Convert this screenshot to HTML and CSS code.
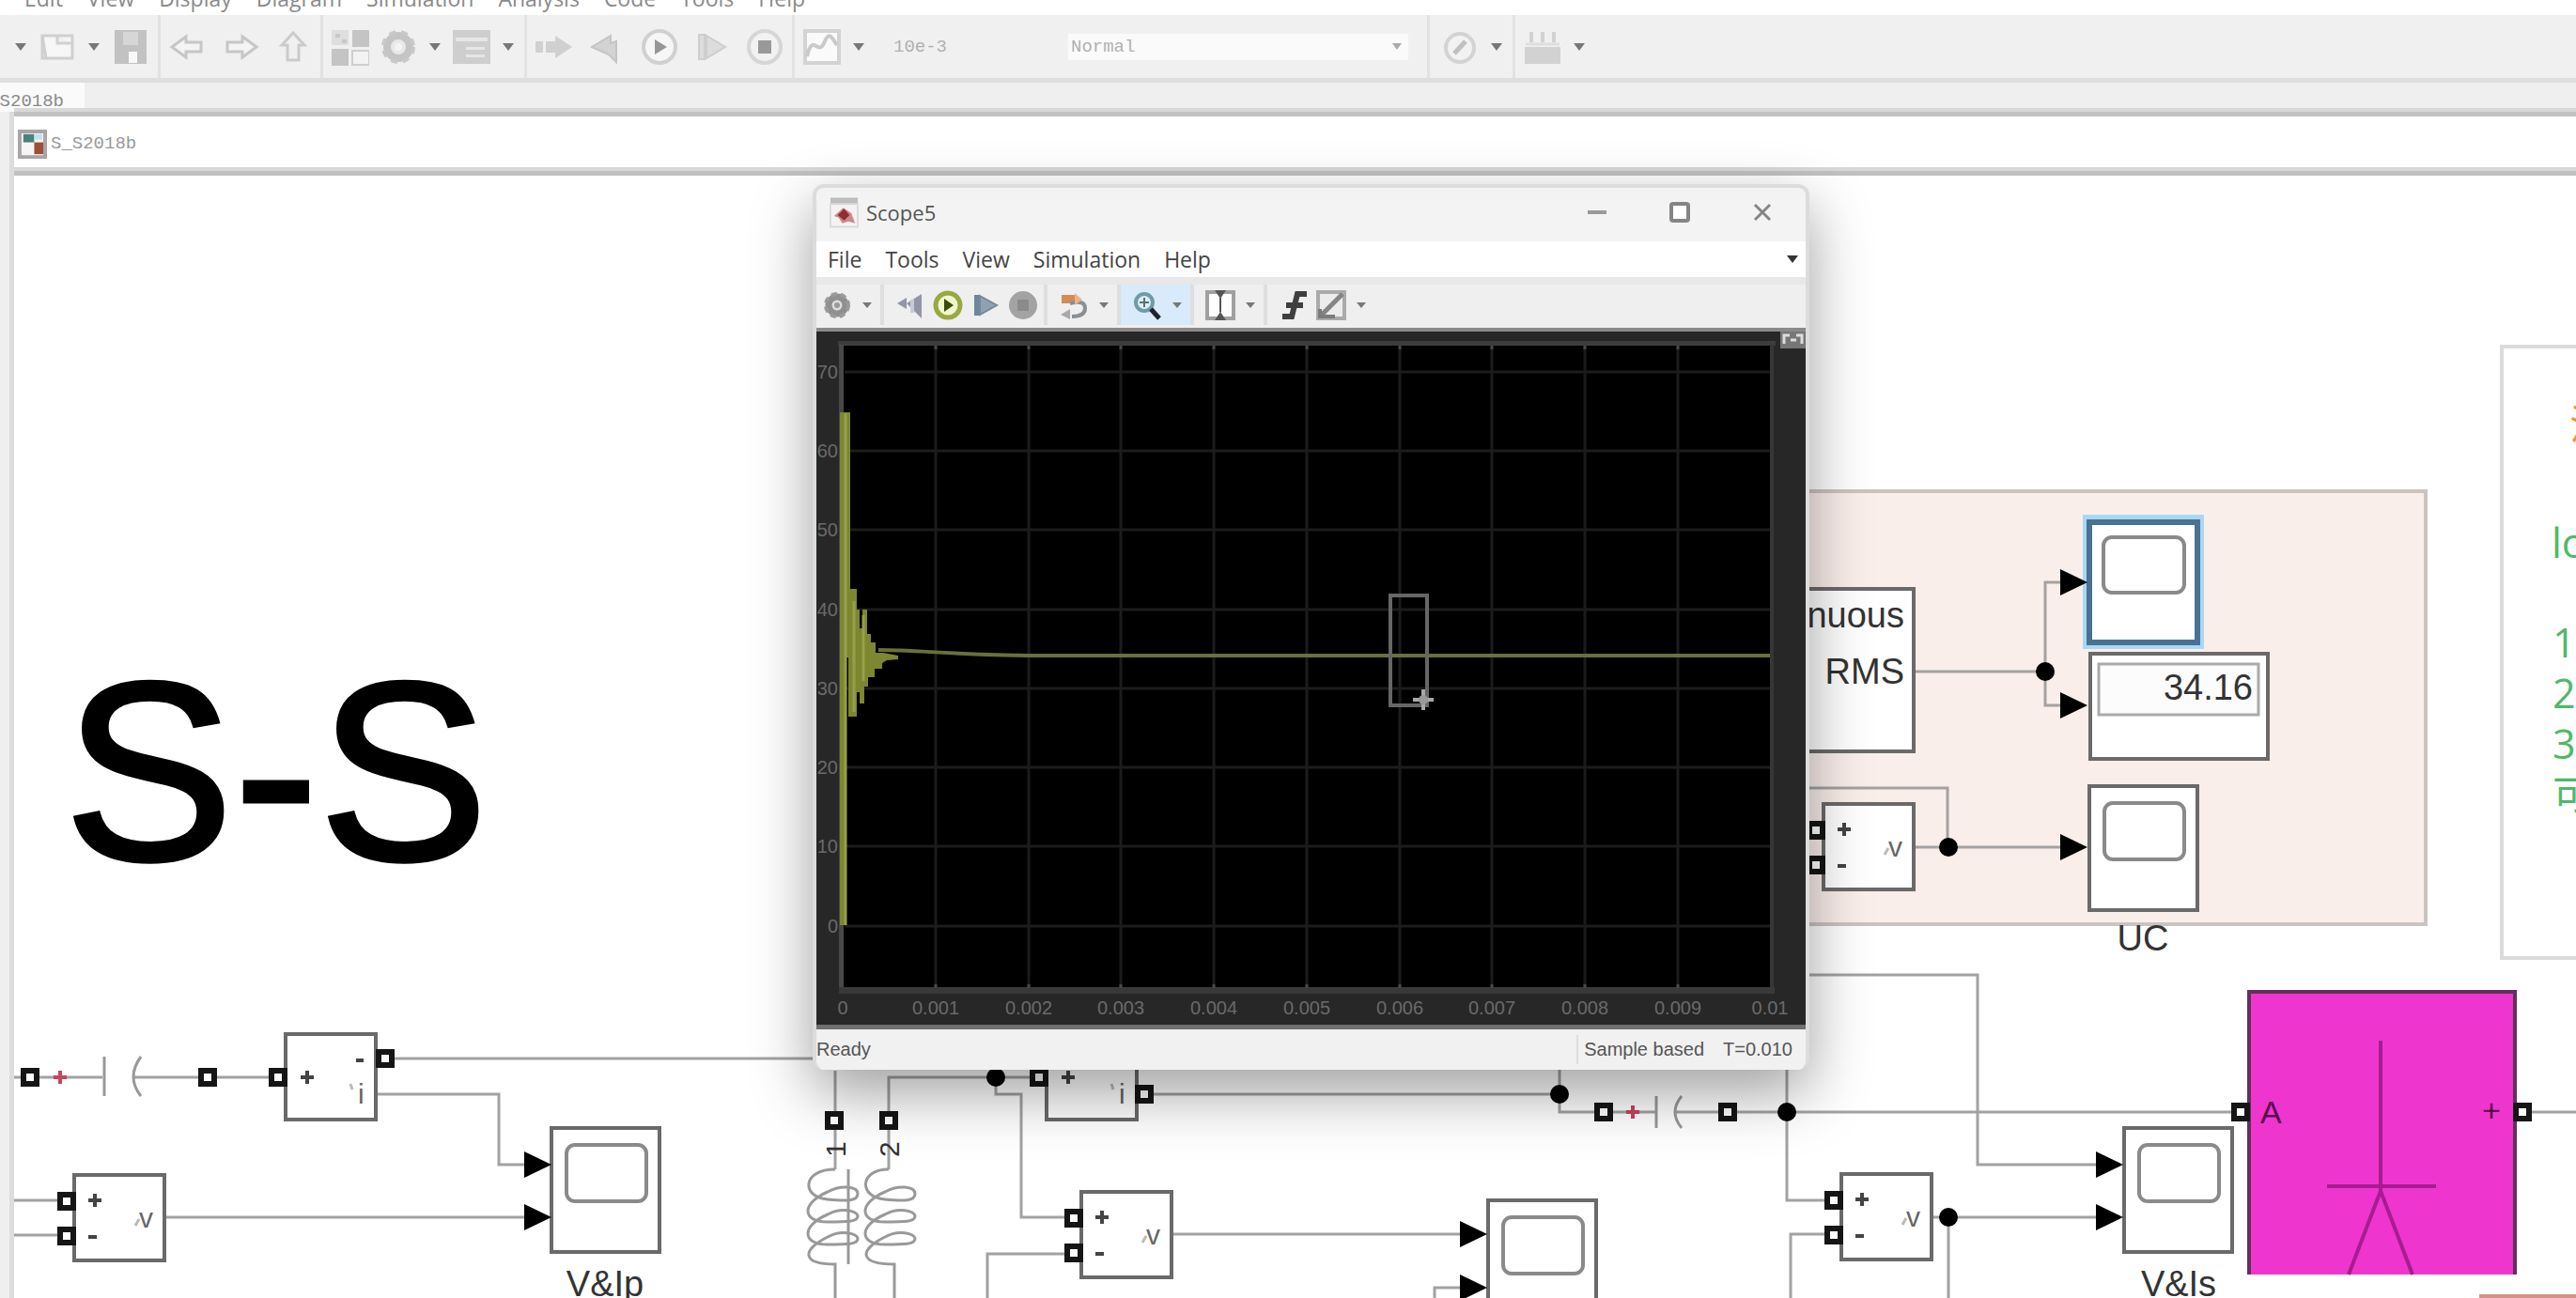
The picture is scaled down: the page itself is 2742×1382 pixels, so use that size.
FILE: index.html
```html
<!DOCTYPE html>
<html lang="en">
<head>
<meta charset="utf-8">
<title>S_S2018b</title>
<link rel="stylesheet" href="styles.css">
</head>
<body>
<div class="app">
  <nav class="menubar" aria-label="Main menu">
    <button>Edit</button><button>View</button><button>Display</button><button>Diagram</button><button>Simulation</button><button>Analysis</button><button>Code</button><button>Tools</button><button>Help</button>
  </nav>

  <div class="toolbar" role="toolbar" aria-label="Model toolbar">
    <div class="group">
      <button class="caret" aria-label="New options"></button>
      <button aria-label="Open"><svg viewBox="0 0 40 40"><path d="M4 8h32v24H8zM4 8v24h4M20 8v8h16" fill="#f6f6f6" stroke="#cfcfcf" stroke-width="3"/></svg></button>
      <button class="caret" aria-label="Open options"></button>
      <button aria-label="Save"><svg viewBox="0 0 40 40"><path d="M3 2h34v36H3z" fill="#c2c2c2"/><path d="M12 4h16v14H12z" fill="#d6d6d6"/><path d="M18 25h9v12h-9z" fill="#f8f8f8"/></svg></button>
    </div>
    <div class="group wide">
      <button aria-label="Back"><svg viewBox="0 0 40 40"><path d="M3 20 18 9v6h16v10H18v6z" fill="#f4f4f4" stroke="#c6c6c6" stroke-width="3"/></svg></button>
      <button aria-label="Forward"><svg viewBox="0 0 40 40"><path d="M37 20 22 9v6H6v10h16v6z" fill="#f4f4f4" stroke="#c6c6c6" stroke-width="3"/></svg></button>
      <button aria-label="Up"><svg viewBox="0 0 40 40"><path d="M20 5 8 18h6v16h12V18h6z" fill="#f0f0f0" stroke="#cbcbcb" stroke-width="3"/></svg></button>
    </div>
    <div class="group">
      <button aria-label="Library browser"><svg viewBox="0 0 40 40"><path d="M0 2h18v16H0z" fill="#dedede"/><path d="M4 6h5v4H4zM11 12h5v4h-5z" fill="#c8c8c8"/><path d="M22 2h18v18H22z" fill="#c4c4c4"/><path d="M0 22h18v18H0z" fill="#c4c4c4"/><path d="M22 24h18v15H22z" fill="#f3f3f3" stroke="#cfcfcf" stroke-width="2"/></svg></button>
      <button aria-label="Model configuration"><svg viewBox="0 0 40 40"><circle cx="20" cy="20" r="12" fill="#e8e8e8" stroke="#c4c4c4" stroke-width="8"/><circle cx="20" cy="20" r="16" fill="none" stroke="#c8c8c8" stroke-width="4" stroke-dasharray="7 6"/><circle cx="20" cy="20" r="4" fill="#f4f4f4"/></svg></button>
      <button class="caret" aria-label="Configuration options"></button>
      <button aria-label="Model explorer"><svg viewBox="0 0 40 40"><path d="M0 2h40v36H0z" fill="#cecece"/><path d="M3 10h34v4H3zM14 20h20v3H14zM14 28h20v3H14z" fill="#e6e6e6"/></svg></button>
      <button class="caret" aria-label="Explorer options"></button>
    </div>
    <div class="group wide">
      <button aria-label="Fast restart"><svg viewBox="0 0 40 40"><path d="M0 14h8v12H0zM11 14h10V8l18 12-18 12v-6H11z" fill="#d0d0d0"/></svg></button>
      <button aria-label="Step back"><svg viewBox="0 0 40 40"><path d="M4 20 24 8v8l6-2v22l-8-8z" fill="#d3d3d3" stroke="#c4c4c4" stroke-width="2"/></svg></button>
      <button aria-label="Run"><svg viewBox="0 0 40 40"><circle cx="20" cy="20" r="17" fill="#f6f6f6" stroke="#d0d0d0" stroke-width="4"/><path d="M15 12v16l13-8z" fill="#969696"/></svg></button>
      <button aria-label="Step forward"><svg viewBox="0 0 40 40"><path d="M6 7h6v26H6zM14 8l20 12-20 12z" fill="#dcdcdc" stroke="#cecece" stroke-width="2"/></svg></button>
      <button aria-label="Stop"><svg viewBox="0 0 40 40"><circle cx="20" cy="20" r="17" fill="#f2f2f2" stroke="#d6d6d6" stroke-width="4"/><path d="M13 13h14v14H13z" fill="#999"/></svg></button>
    </div>
    <div class="group fields">
      <button aria-label="Data inspector"><svg viewBox="0 0 40 40"><path d="M2 3h36v34H2z" fill="#fafafa" stroke="#d3d3d3" stroke-width="4"/><path d="M4 30C10 4 16 30 22 16s8-6 14 2" fill="none" stroke="#cacaca" stroke-width="4"/></svg></button>
      <button class="caret" aria-label="Inspector options"></button>
      <input class="stop-time" type="text" value="10e-3" aria-label="Stop time">
      <span class="mode"><select aria-label="Simulation mode"><option>Normal</option></select></span>
    </div>
    <div class="group check">
      <button aria-label="Model advisor"><svg viewBox="0 0 40 40"><circle cx="20" cy="21" r="15" fill="#f2f2f2" stroke="#d3d3d3" stroke-width="4"/><path d="m14 27 12-13" fill="none" stroke="#c0c0c0" stroke-width="5"/></svg></button>
      <button class="caret" aria-label="Advisor options"></button>
    </div>
    <div class="group">
      <button aria-label="Build"><svg viewBox="0 0 40 40"><path d="M6 4h4v11H6zM18 4h4v11h-4zM30 4h4v11h-4zM1 20h38v18H1z" fill="#d2d2d2"/><path d="M2 17h36" stroke="#dedede" stroke-width="3"/></svg></button>
      <button class="caret" aria-label="Build options"></button>
    </div>
  </div>

  <div class="tabs"><button class="tab">S_S2018b</button></div>

  <div class="workspace">
    <aside class="rail"></aside>
    <main class="editor">
      <div class="crumb">
        <svg class="crumb-icon" viewBox="0 0 32 32"><path d="M2 2h28v28H2z" fill="#f6f6f6" stroke="#a9a4a6" stroke-width="4"/><path d="M6 5h12v9H6z" fill="#4d8078"/><path d="M18 14h10v13H18z" fill="#9a5236"/><path d="M18 5h9v6h-9z" fill="#bfe4ea"/></svg>
        <a href="#model">S_S2018b</a>
      </div>
      <div class="canvas" id="model">
        <svg class="diagram" role="img" aria-label="Block diagram">
          <defs>
            <g id="port"><rect x="-7" y="-7" width="14" height="14" fill="#fff" stroke="#151515" stroke-width="6"/></g>
            <path id="arrow" d="M-29-14 0 0-29 14z"/>
            <g id="scope"><rect width="115" height="132" class="block"/><rect x="16" y="18" width="85" height="60" rx="9" class="screen"/></g>
            <g id="volt">
              <rect width="96" height="91" class="block"/>
              <use href="#port" x="-8" y="28"/><use href="#port" x="-8" y="65"/>
              <path d="M15 27h14M22 20v14M15 66h9" class="sign"/>
              <path d="m65 54 4-7" class="faint"/>
              <text x="69" y="56" class="small">v</text>
            </g>
            <g id="amp">
              <rect width="96" height="91" class="block"/>
              <use href="#port" x="-8" y="46"/>
              <path d="M16 46h14M23 39v14M75 28h8" class="sign"/>
              <path d="m69 53 2 6" class="faint"/>
              <text x="77" y="74" class="small">i</text>
            </g>
          </defs>
          <g transform="translate(-15 -187)">
            <text x="68" y="915" class="title">S-S</text>

            <rect x="1700" y="523" width="882" height="461" class="area"/>

            <g class="wire">
              <path d="M15 1147h94M142 1147h160M410 1127h500M402 1165h129v75h35M176 1296h390M15 1278h54M15 1315h54"/>
              <path d="M889 1140v105M946 1245v-98h160M1060 1147v18h27v131h50M1218 1165h442M1660 1130v54h103M1783 1184h602M1902 1130v148h40M1140 1335h-89v60M1249 1314h310M1527 1395v-24h40"/>
              <path d="M1922 1038h183v202h140M2057 1296h190M2074 1296v99M1950 1314h-44v80M2685 1184h60"/>
              <path d="M2038 715h139M2205 620h-28v131h28M1900 839h173v63M2039 902h170"/>
            </g>
            <g class="thin">
              <path d="M111 1125v42M150 1125q-16 22 0 42M1763 1167v34M1790 1167q-14 17 0 34M903 1245v101"/>
              <path d="M889 1245c-36 0-36 30-8 32 20 2 32 2 32-6s-18-10-32-2c-28 12-28 32 0 32 20 0 32 0 32-6s-18-10-32-2c-28 12-28 32 0 32 20 0 32 0 32-6s-18-10-32-2c-28 14-28 29 8 29v40"/>
              <path d="M946 1245c-32 0-32 30-4 32 20 2 32 2 32-6s-18-10-32-2c-28 12-28 32 0 32 20 0 32 0 32-6s-18-10-32-2c-28 12-28 32 0 32 20 0 32 0 32-6s-18-10-32-2c-28 14-28 29 10 29v40"/>
            </g>
            <path d="M57 1147h14M64 1140v14M1731 1184h14M1738 1177v14" class="polarity"/>

            <use href="#port" x="32" y="1147"/><use href="#port" x="221" y="1147"/>
            <use href="#amp" x="304" y="1101"/><use href="#port" x="410" y="1127"/>
            <use href="#scope" x="587" y="1201"/>
            <use href="#arrow" x="587" y="1240"/><use href="#arrow" x="587" y="1296"/>
            <use href="#volt" x="79" y="1251"/>
            <text x="644" y="1380" class="label">V&amp;Ip</text>

            <use href="#port" x="888" y="1193"/><use href="#port" x="946" y="1193"/>
            <text transform="translate(900 1232) rotate(-90)" class="pin">1</text>
            <text transform="translate(957 1232) rotate(-90)" class="pin">2</text>
            <use href="#amp" x="1114" y="1101"/><use href="#port" x="1218" y="1165"/>
            <use href="#volt" x="1151" y="1269"/>
            <use href="#scope" x="1584" y="1278"/>
            <use href="#arrow" x="1583" y="1314"/><use href="#arrow" x="1583" y="1371"/>
            <use href="#port" x="1707" y="1184"/><use href="#port" x="1839" y="1184"/>

            <use href="#volt" x="1960" y="1250"/>
            <use href="#scope" x="2261" y="1201"/>
            <use href="#arrow" x="2260" y="1240"/><use href="#arrow" x="2260" y="1296"/>
            <text x="2319" y="1380" class="label">V&amp;Is</text>

            <path d="M2394 1357V1056h283v301z" fill="#ee36cf"/>
            <path d="M2394 1357V1056h283v301" class="edge"/>
            <path d="M2534 1108v160M2477 1263h116M2534 1268l-34 89M2534 1268l34 89" class="load"/>
            <text x="2406" y="1196" class="terminal">A</text>
            <text x="2642" y="1194" class="terminal">+</text>
            <use href="#port" x="2385" y="1184"/><use href="#port" x="2685" y="1184"/>
            <rect x="2639" y="1378" width="120" height="8" fill="#d4938a"/>

            <rect x="1800" y="627" width="237" height="173" class="block"/>
            <text x="2027" y="668" class="value">Continuous</text>
            <text x="2027" y="728" class="value">RMS</text>
            <rect x="2225" y="696" width="189" height="112" class="block"/>
            <rect x="2234" y="707" width="170" height="54" fill="#fcfcfc" stroke="#aaa" stroke-width="3"/>
            <text x="2398" y="745" class="value">34.16</text>
            <rect x="2220" y="551" width="123" height="137" class="halo"/>
            <rect x="2224" y="556" width="115" height="128" class="picked"/>
            <rect x="2239" y="572" width="86" height="59" rx="9" class="screen"/>
            <use href="#arrow" x="2222" y="620"/><use href="#arrow" x="2222" y="751"/>
            <use href="#volt" x="1941" y="856"/>
            <use href="#scope" x="2224" y="837"/>
            <use href="#arrow" x="2222" y="902"/>
            <text x="2281" y="1012" class="label">UC</text>

            <g class="dot"><circle cx="1060" cy="1147" r="10"/><circle cx="1660" cy="1165" r="10"/><circle cx="1902" cy="1184" r="10"/><circle cx="2074" cy="1296" r="10"/><circle cx="2177" cy="715" r="10"/><circle cx="2074" cy="902" r="10"/></g>

            <rect x="2663" y="369" width="200" height="651" class="note"/>
            <text x="2735" y="468" class="note-head">注</text>
            <text x="2716" y="594" class="note-text">lo</text>
            <text x="2717" y="700" class="note-text">1.</text>
            <text x="2717" y="754" class="note-text">2.</text>
            <text x="2717" y="808" class="note-text">3.</text>
            <text x="2717" y="862" class="note-text">可</text>
          </g>
        </svg>
      </div>
    </main>
  </div>

  <section class="window" aria-label="Scope5">
    <header class="titlebar">
      <svg class="app-icon" viewBox="0 0 32 36"><path d="M1 2h30v7H1z" fill="#bdbdbd"/><path d="M1 9h30v25H1z" fill="#f7f2f2" stroke="#dadada" stroke-width="2"/><path d="m5 22 10-9 9 6 4 11-7-2-7 2-4-6z" fill="#c98a8a"/><path d="m9 21 7-7 6 7-6 6z" fill="#8e2f33"/></svg>
      <h1>Scope5</h1>
      <button aria-label="Minimize"><svg viewBox="0 0 24 24"><path d="M2 12h20" stroke="#999" stroke-width="4"/></svg></button>
      <button aria-label="Maximize"><svg viewBox="0 0 24 24"><rect x="3" y="3" width="18" height="18" rx="2" fill="#fff" stroke="#858585" stroke-width="4"/></svg></button>
      <button aria-label="Close"><svg viewBox="0 0 24 24"><path d="m4 4 16 16M20 4 4 20" stroke="#858585" stroke-width="3"/></svg></button>
    </header>
    <nav class="scope-menu" aria-label="Scope menu">
      <button>File</button><button>Tools</button><button>View</button><button>Simulation</button><button>Help</button>
      <button class="caret dark" aria-label="Dock options"></button>
    </nav>
    <div class="scope-tools" role="toolbar" aria-label="Scope toolbar">
      <div class="set">
        <button aria-label="Configuration"><svg viewBox="0 0 32 32"><circle cx="16" cy="16" r="9" fill="#ddd" stroke="#8f8f8f" stroke-width="7"/><circle cx="16" cy="16" r="12" fill="none" stroke="#9a9a9a" stroke-width="4" stroke-dasharray="6 4"/><circle cx="16" cy="16" r="3" fill="#999"/></svg></button>
        <button class="caret" aria-label="Configuration options"></button>
      </div>
      <div class="set">
        <button aria-label="Step back"><svg viewBox="0 0 32 32"><path d="M2 14 12 8v12zM12 14 28 4v26z" fill="#9295a6"/><path d="M16 10h4v14h-4z" fill="#c8cbd6"/></svg></button>
        <button aria-label="Run"><svg viewBox="0 0 32 32"><circle cx="16" cy="16" r="13" fill="#f0f7cc" stroke="#9aa844" stroke-width="5"/><path d="M12 9v14l10-7z" fill="#3c4a10"/></svg></button>
        <button aria-label="Step forward"><svg viewBox="0 0 32 32"><path d="M4 5h5v22H4z" fill="#70859a"/><path d="M10 6l18 10-18 10z" fill="#8ea2b2" stroke="#74899c" stroke-width="2"/></svg></button>
        <button aria-label="Stop"><svg viewBox="0 0 32 32"><circle cx="16" cy="16" r="15" fill="#a3a3a3"/><path d="M10 10h12v12H10z" fill="#8b8b8b"/></svg></button>
      </div>
      <div class="set">
        <button aria-label="Highlight block"><svg viewBox="0 0 32 32"><path d="M3 5h16v9H3z" fill="#d58b58"/><path d="M12 14q16-4 16 5t-14 9" fill="none" stroke="#8a8f94" stroke-width="4"/><path d="m2 26 10-6v11z" fill="#aaa"/><path d="m17 3 8 7-8 6z" fill="#e6b48c"/></svg></button>
        <button class="caret" aria-label="Highlight options"></button>
      </div>
      <div class="set active">
        <button aria-label="Zoom"><svg viewBox="0 0 32 32"><circle cx="13" cy="13" r="9" fill="#dceff2" stroke="#6f9aa8" stroke-width="4"/><path d="M13 8v10M8 13h10" stroke="#56727e" stroke-width="2"/><path d="m20 20 9 10" stroke="#1c2430" stroke-width="5"/></svg></button>
        <button class="caret" aria-label="Zoom options"></button>
      </div>
      <div class="set">
        <button aria-label="Scale axes"><svg viewBox="0 0 32 32"><path d="M2 2h28v28H2z" fill="#fdfdfd" stroke="#a0a0a0" stroke-width="4"/><path d="M10 0h12l-6 9zM10 32h12l-6-9zM15 8h2v16h-2z" fill="#555"/></svg></button>
        <button class="caret" aria-label="Scale options"></button>
      </div>
      <div class="set last">
        <button aria-label="Triggers"><svg viewBox="0 0 32 32"><path d="M4 28h10L20 4h10M8 16h18" fill="none" stroke="#3f3f3f" stroke-width="6"/></svg></button>
        <button aria-label="Measurements"><svg viewBox="0 0 32 32"><path d="M2 2h28v28H2z" fill="#ececec" stroke="#aaa" stroke-width="4"/><path d="M4 28 28 4" stroke="#858585" stroke-width="5"/><path d="M4 20v8h16" fill="none" stroke="#7c7c7c" stroke-width="4"/></svg></button>
        <button class="caret" aria-label="Measurement options"></button>
      </div>
    </div>
    <svg class="plot" role="img" aria-label="RMS signal, 0 to 0.01 seconds">
      <g transform="translate(-869 -353)">
        <rect x="892" y="363" width="998" height="5" fill="#3d3d3d"/>
        <rect x="893" y="367" width="5" height="690" fill="#484848"/>
        <rect x="898" y="368" width="986" height="683" fill="#000"/>
        <rect x="1884" y="367" width="4" height="684" fill="#363636"/>
        <rect x="893" y="1051" width="996" height="7" fill="#39393a"/>
        <path d="M996 369v682M1095 369v682M1193 369v682M1292 369v682M1391 369v682M1490 369v682M1588 369v682M1687 369v682M1786 369v682M899 396h985M899 480h985M899 564h985M899 649h985M899 733h985M899 817h985M899 901h985M899 986h985" stroke="#1c1c1c" stroke-width="3"/>
        <path d="M996 368v4M1095 368v4M1193 368v4M1292 368v4M1391 368v4M1490 368v4M1588 368v4M1687 368v4M1786 368v4M996 1048v4M1095 1048v4M1193 1048v4M1292 1048v4M1391 1048v4M1490 1048v4M1588 1048v4M1687 1048v4M1786 1048v4" stroke="#484848" stroke-width="3"/>
        <path d="M894 439h11v188h7v22h3v20h3v-20h5v26h4v9h5v11h8l16 3v4l-12 1-5 3v6h-8v9h-7v10h-4v18h-5v-12h-3v26h-4v-24V763h-5V700H901V985h-7z" fill="#7c8730"/>
        <path d="M900 440v545M909 640v118M919 655v70" stroke="#96a04a" stroke-width="3" fill="none"/>
        <path d="M935 692C980 692 1020 698 1120 698H1884" fill="none" stroke="#69703a" stroke-width="4"/>
        <rect x="1480" y="634" width="39" height="117" fill="none" stroke="#666" stroke-width="4"/>
        <path d="M1515 734v22M1504 745h22" stroke="#a8a8a8" stroke-width="4"/>
        <circle cx="1515" cy="745" r="5" fill="#999"/>
        <g class="ticks y"><text x="892" y="403">70</text><text x="892" y="487">60</text><text x="892" y="571">50</text><text x="892" y="656">40</text><text x="892" y="740">30</text><text x="892" y="824">20</text><text x="892" y="908">10</text><text x="892" y="993">0</text></g>
        <g class="ticks"><text x="897" y="1080">0</text><text x="996" y="1080">0.001</text><text x="1095" y="1080">0.002</text><text x="1193" y="1080">0.003</text><text x="1292" y="1080">0.004</text><text x="1391" y="1080">0.005</text><text x="1490" y="1080">0.006</text><text x="1588" y="1080">0.007</text><text x="1687" y="1080">0.008</text><text x="1786" y="1080">0.009</text><text x="1884" y="1080">0.01</text></g>
        <rect x="1895" y="353" width="27" height="18" fill="#777"/>
        <path d="M1899 366v-9h6M1918 366v-9h-6M1906 362h6" stroke="#ddd" stroke-width="3" fill="none"/>
      </g>
    </svg>
    <footer class="status">
      <span class="grow">Ready</span><span class="cell">Sample based</span><span class="cell">T=0.010</span>
    </footer>
  </section>
</div>
</body>
</html>
```
FILE: styles.css
```css
* { box-sizing: border-box; }

body {
  margin: 0;
  background: #fff;
  font-family: "Open Sans", "Noto Sans", sans-serif;
  font-size: 23px;
  color: #555;
}

button {
  margin: 0;
  padding: 0;
  border: 0;
  background: none;
  color: inherit;
  font: inherit;
}

svg { display: block; }

.app {
  position: relative;
  display: flex;
  flex-direction: column;
  height: 100vh;
  overflow: hidden;
}

.menubar {
  display: flex;
  align-items: flex-end;
  gap: 26px;
  height: 16px;
  padding: 0 0 6px 26px;
  color: #8a8a8a;
  line-height: 24px;
}

/* model toolbar */
.toolbar {
  display: flex;
  flex: none;
  height: 72px;
  padding-left: 5px;
  border-bottom: 5px solid #dedede;
  background: #f0f0f0;
}

.group {
  display: flex;
  align-items: center;
  gap: 11px;
  padding: 0 9px;
  border-right: 3px solid #e2e2e2;
}

.group:last-child { border-right: 0; }
.group.wide { gap: 16px; }
.group.check { padding: 0 9px 0 12px; }
.group svg { width: 40px; height: 40px; }

.caret {
  display: flex;
  justify-content: center;
  width: 16px;
}

.caret::before {
  content: "";
  border: 6px solid transparent;
  border-top: 8px solid #777;
  border-bottom: 0;
}

.group.fields { padding-right: 20px; }

.stop-time,
.mode select {
  border: 0;
  outline: 0;
  background: transparent;
  color: #b0b0b0;
  font: 19px "Liberation Mono", monospace;
}

.stop-time {
  width: 175px;
  margin-left: 18px;
  padding: 0;
}

.mode {
  display: flex;
  align-items: center;
  width: 362px;
  height: 28px;
  background: #fafafa;
}

.mode select {
  flex: 1;
  height: 28px;
  padding: 0 3px;
  appearance: none;
}

.mode::after {
  content: "";
  margin-right: 7px;
  border: 5px solid transparent;
  border-top: 7px solid #aaa;
  border-bottom: 0;
}

.tabs {
  flex: none;
  height: 31px;
  background: #efefef;
}

.tab {
  display: flex;
  justify-content: flex-end;
  align-items: center;
  width: 90px;
  height: 36px;
  padding: 3px 22px 0 0;
  overflow: hidden;
  background: #fafafa;
  color: #8a8a8a;
  font: 19px "Liberation Mono", monospace;
}

.workspace {
  display: flex;
  flex: 1;
  min-height: 0;
}

.rail {
  width: 10px;
  background: #efefef;
}

.editor {
  display: flex;
  flex: 1;
  flex-direction: column;
  min-width: 0;
  border-left: 5px solid #dcdcdc;
}

.crumb {
  display: flex;
  align-items: center;
  gap: 4px;
  height: 68px;
  padding-left: 4px;
  border-top: 5px solid #c2c2c2;
  border-bottom: 5px solid #c0c0c0;
  background: #fff;
  box-shadow: 0 -4px #d8d8d8, inset 0 -4px #d8d8d8;
}

.crumb a {
  color: #999;
  font: 19px "Liberation Mono", monospace;
  text-decoration: none;
}

.crumb-icon { width: 31px; height: 31px; }

.canvas { flex: 1; min-height: 0; }

/* block diagram */
.diagram {
  width: 100%;
  height: 100%;
  font-family: "Liberation Sans", Arial, sans-serif;
}

.title { font-size: 271px; fill: #000; stroke: #000; stroke-width: 4; }
.label, .value { font-size: 38px; fill: #333; }
.label { text-anchor: middle; }
.value { text-anchor: end; }
.pin, .small { font-size: 30px; fill: #333; }
.small { fill: #666; }
.terminal { font-size: 34px; fill: #5a0a4e; }
.block { fill: #fff; stroke: #6a6a6a; stroke-width: 4; }
.screen { fill: #fff; stroke: #8a8a8a; stroke-width: 4; }
.area { fill: #faeeea; stroke: #cac4c1; stroke-width: 4; }
.wire { fill: none; stroke: #a2a2a2; stroke-width: 3; }
.thin { fill: none; stroke: #999; stroke-width: 3; }
.sign { fill: none; stroke: #444; stroke-width: 4; }
.faint { fill: none; stroke: #bbb; stroke-width: 3; }
.polarity { fill: none; stroke: #c8455c; stroke-width: 4; }
.edge { fill: none; stroke: #63305a; stroke-width: 4; }
.load { fill: none; stroke: #a81c92; stroke-width: 4; }
.halo { fill: none; stroke: #a9d8f5; stroke-width: 6; }
.picked { fill: #fff; stroke: #4a7191; stroke-width: 6; }
.note { fill: #fff; stroke: #dadada; stroke-width: 4; }

.note-head,
.note-text {
  font-family: "Open Sans", "Noto Sans CJK SC", sans-serif;
  font-size: 43px;
  fill: #4fb86a;
}

.note-head { fill: #e8963c; }

/* scope window */
.window {
  position: absolute;
  top: 196px;
  left: 865px;
  width: 1061px;
  overflow: hidden;
  border: 4px solid #dcdcdc;
  border-width: 4px 4px 0;
  border-radius: 12px;
  background: #f3f3f3;
  background-clip: padding-box;
  box-shadow: 0 24px 64px rgba(0, 0, 0, 0.38);
}

.titlebar {
  display: flex;
  align-items: center;
  height: 57px;
  padding: 0 34px 5px 14px;
}

.app-icon { width: 31px; height: 36px; }

.titlebar h1 {
  flex: 1;
  margin: 0 0 0 8px;
  font-size: 22px;
  font-weight: 400;
}

.titlebar button { margin-left: 64px; }
.titlebar button svg { width: 24px; height: 24px; }

.scope-menu {
  display: flex;
  align-items: center;
  gap: 25px;
  height: 38px;
  padding: 0 6px 0 12px;
  background: #fff;
  color: #444;
}

.scope-menu .caret { margin-left: auto; }
.caret.dark::before { border-top-color: #333; }

.scope-tools {
  display: flex;
  height: 58px;
  padding-bottom: 3px;
  border-top: 8px solid #e8e8e8;
  border-bottom: 4px solid #8a8a8a;
  background: #efefef;
}

.set {
  display: flex;
  align-items: center;
  gap: 8px;
  padding: 0 6px 0 12px;
  border-right: 4px solid #dedede;
}

.set:first-child { padding-left: 6px; }
.set.last { border-right: 0; }
.set.active { background: #d9ebfa; }
.set svg { width: 32px; height: 32px; }

.set .caret::before {
  border-width: 5px;
  border-top-width: 6px;
  border-bottom-width: 0;
}

.plot {
  width: 100%;
  height: 738px;
  background: #272727;
  font-family: "Liberation Sans", Arial, sans-serif;
}

.ticks { font-size: 20px; fill: #6a6a6a; text-anchor: middle; }
.ticks.y { text-anchor: end; }

.status {
  display: flex;
  align-items: center;
  height: 48px;
  border-top: 5px solid #6f6f6f;
  background: #f1f1f1;
  font: 20px "Liberation Sans", Arial, sans-serif;
}

.grow { flex: 1; }

.cell {
  padding: 4px 14px 4px 6px;
  border-left: 2px solid #dedede;
}

.cell + .cell { border-left: 0; }
```
